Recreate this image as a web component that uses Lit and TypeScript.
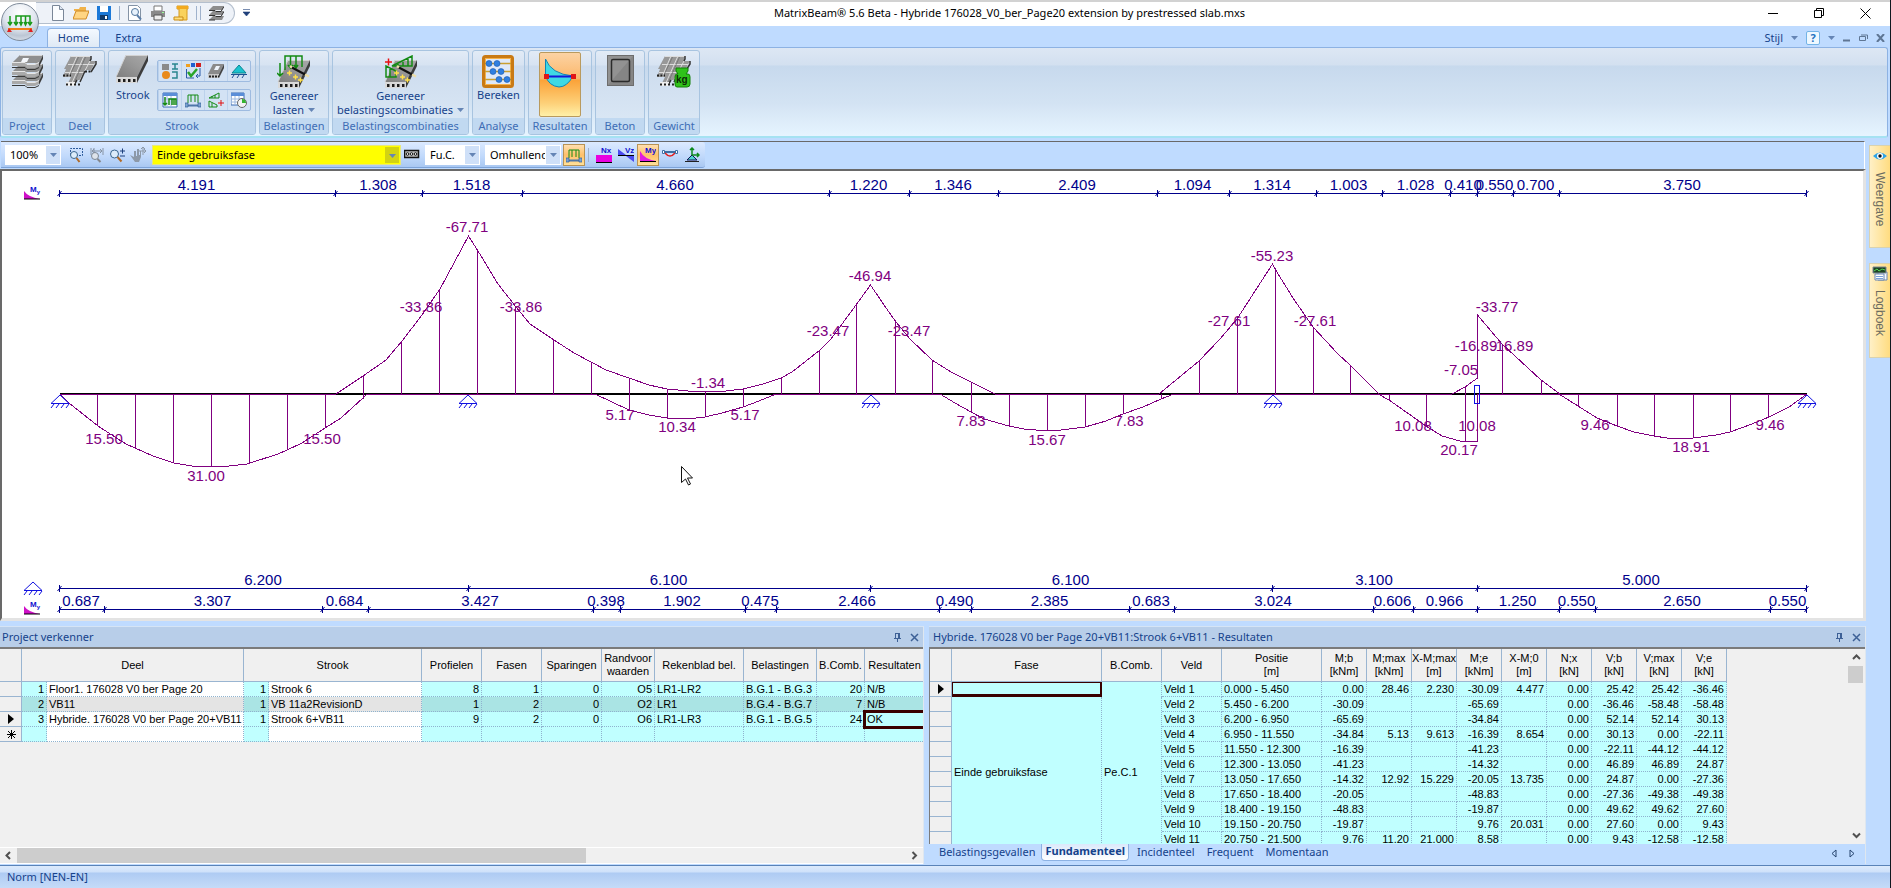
import { LitElement, html, svg, css, nothing } from 'lit';
import { customElement } from 'lit/decorators.js';
import { classMap } from 'lit/directives/class-map.js';

/* ---------- drawing data ---------- */

const X0 = 59.6;
const PX_PER_M = 65.93;
const AXIS_Y = 394;

const dimTop = ['4.191', '1.308', '1.518', '4.660', '1.220', '1.346', '2.409', '1.094', '1.314', '1.003', '1.028', '0.410', '0.550', '0.700', '3.750'];
const dimSupports = ['6.200', '6.100', '6.100', '3.100', '5.000'];
const dimZero = ['0.687', '3.307', '0.684', '3.427', '0.398', '1.902', '0.475', '2.466', '0.490', '2.385', '0.683', '3.024', '0.606', '0.966', '1.250', '0.550', '2.650', '0.550'];
const supports = [0, 6.2, 12.3, 18.4, 26.5];

const curves = [
  '336,394 363,376 386,360 402,341 422,315 440,289 468.5,236 478,251 498,284 516,307 530,324 554,340 574,353 591,362 606,370 629,378 649,385 667,389 688,391 705,392 726,391 743,389 763,384 781,378 792,372 820,350 831,339 856,305 870.5,285 884,305 896,322 910,339 932,360 951,372 971,382 995,394',
  '1159,394 1199,361 1220,339 1237,319 1272.5,264 1275,269 1293,298 1313,327 1338,354 1350,365 1379,394',
  '1452,394 1465,387 1477.5,378 1477.5,315 1502,344 1528,368 1541,380 1560,394',
  '60,394 69,403 98,426 118,439 126,444 135,448 153,456 174,463 192,466 211,467 229,466 247,464 278,454 287,450 302,443 325,428 341,418 363,398 367,394',
  '595,394 629,410 649,415 667,418 696,418 705,417 722,413 743,407 759,401 776,394',
  '940,394 955,403 971,412 984,419 1009,426 1024,429 1047,431 1061,430 1085,427 1106,421 1123,414 1143,407 1161,399 1174,394',
  '1378,394 1389,400 1426,426 1442,436 1460,441 1477.5,441 1477.5,394',
  '1559,394 1578,406 1597,418 1617,426 1634,432 1654,436 1667,438 1693,438 1716,435 1730,432 1752,424 1769,417 1789,407 1807,394',
];

const ordinates: number[][] = [
  [97, 394, 426], [135, 394, 448], [173, 394, 463], [211, 394, 467], [249, 394, 464], [287, 394, 450], [325, 394, 428],
  [363, 376, 399], [401, 341, 394], [439, 289, 394], [477, 251, 394], [515, 307, 394], [553, 340, 394], [591, 362, 394],
  [629, 378, 410], [667, 389, 418], [705, 391, 417], [743, 389, 407], [781, 378, 394], [819, 350, 394], [856, 305, 394],
  [895, 322, 394], [932, 360, 394], [971, 382, 412], [1009, 394, 426], [1047, 394, 431], [1085, 394, 427], [1123, 394, 414],
  [1161, 394, 399], [1199, 361, 394], [1237, 319, 394], [1275, 268, 394], [1313, 327, 394], [1350, 366, 394], [1389, 394, 400],
  [1426, 394, 426], [1465, 387, 441], [1502, 344, 394], [1541, 380, 394], [1578, 394, 406], [1617, 394, 426], [1654, 394, 436],
  [1693, 394, 438], [1730, 394, 432], [1768, 394, 417],
];

const envelope = [[60, 336], [367, 595], [776, 940], [995, 1159], [1174, 1378], [1380, 1452], [1478, 1807]];

const values: [number, number, string][] = [
  [467, 232, '-67.71'], [421, 312, '-33.86'], [521, 312, '-33.86'], [104, 444, '15.50'], [322, 444, '15.50'], [206, 481, '31.00'],
  [620, 420, '5.17'], [677, 432, '10.34'], [745, 420, '5.17'], [708, 388, '-1.34'], [828, 336, '-23.47'], [909, 336, '-23.47'],
  [870, 281, '-46.94'], [971, 426, '7.83'], [1129, 426, '7.83'], [1047, 445, '15.67'], [1229, 326, '-27.61'], [1315, 326, '-27.61'],
  [1272, 261, '-55.23'], [1413, 431, '10.08'], [1477, 431, '10.08'], [1459, 455, '20.17'], [1461, 375, '-7.05'], [1476, 351, '-16.89'],
  [1512, 351, '-16.89'], [1497, 312, '-33.77'], [1595, 430, '9.46'], [1770, 430, '9.46'], [1691, 452, '18.91'],
];

/* ---------- table data ---------- */

const projectRows = [
  ['1', 'Floor1. 176028 V0 ber Page 20', '1', 'Strook 6', '8', '1', '0', 'O5', 'LR1-LR2', 'B.G.1 - B.G.3', '20', 'N/B'],
  ['2', 'VB11', '1', 'VB 11a2RevisionD', '1', '2', '0', 'O2', 'LR1', 'B.G.4 - B.G.7', '7', 'N/B'],
  ['3', 'Hybride. 176028 V0 ber Page 20+VB11', '1', 'Strook 6+VB11', '9', '2', '0', 'O6', 'LR1-LR3', 'B.G.1 - B.G.5', '24', 'OK'],
  ['', '', '', '', '', '', '', '', '', '', '', ''],
];
const projectCols = [22, 25, 197, 25, 153, 60, 60, 60, 53, 89, 73, 48, 60];

const resultCols = [22, 150, 60, 60, 100, 45, 45, 45, 45, 45, 45, 45, 45, 45];
const resultHeads = [['M;b', '[kNm]'], ['M;max', '[kNm]'], ['X-M;max', '[m]'], ['M;e', '[kNm]'], ['X-M;0', '[m]'], ['N;x', '[kN]'], ['V;b', '[kN]'], ['V;max', '[kN]'], ['V;e', '[kN]']];
const resultRows = [
  ['0.000 - 5.450', '0.00', '28.46', '2.230', '-30.09', '4.477', '0.00', '25.42', '25.42', '-36.46'],
  ['5.450 - 6.200', '-30.09', '', '', '-65.69', '', '0.00', '-36.46', '-58.48', '-58.48'],
  ['6.200 - 6.950', '-65.69', '', '', '-34.84', '', '0.00', '52.14', '52.14', '30.13'],
  ['6.950 - 11.550', '-34.84', '5.13', '9.613', '-16.39', '8.654', '0.00', '30.13', '0.00', '-22.11'],
  ['11.550 - 12.300', '-16.39', '', '', '-41.23', '', '0.00', '-22.11', '-44.12', '-44.12'],
  ['12.300 - 13.050', '-41.23', '', '', '-14.32', '', '0.00', '46.89', '46.89', '24.87'],
  ['13.050 - 17.650', '-14.32', '12.92', '15.229', '-20.05', '13.735', '0.00', '24.87', '0.00', '-27.36'],
  ['17.650 - 18.400', '-20.05', '', '', '-48.83', '', '0.00', '-27.36', '-49.38', '-49.38'],
  ['18.400 - 19.150', '-48.83', '', '', '-19.87', '', '0.00', '49.62', '49.62', '27.60'],
  ['19.150 - 20.750', '-19.87', '', '', '9.76', '20.031', '0.00', '27.60', '0.00', '9.43'],
  ['20.750 - 21.500', '9.76', '11.20', '21.000', '8.58', '', '0.00', '9.43', '-12.58', '-12.58'],
];

/* ---------- icons ---------- */

const ico = (w: number, h: number, body: unknown) =>
  html`<svg width=${w} height=${h} viewBox="0 0 ${w} ${h}" aria-hidden="true">${body}</svg>`;

const caret = ico(7, 4, svg`<path d="M0 0h7L3.500 4z" fill="#6585b5"/>`);

const slab = (x: number, y: number) => svg`<g transform="translate(${x} ${y})">
  <path d="M10 0H32L21 22H0z" fill="url(#slabTop)"/><path d="M10 .5H32M10 0L0 22" stroke="#d2d2d2" fill="none"/>
  <path d="M0 22H21V28H0z" fill="#d9d9d9"/><path d="M21 22L32 0V6L21 28z" fill="#3d3d3d"/>
  <path d="M2 25.500H20" stroke="#1c1c1c" stroke-width="3" stroke-dasharray="2.500 2.500"/></g>`;
const defs = svg`<defs><linearGradient id="slabTop" x1="0" y1="1" x2="1" y2="0"><stop offset="0" stop-color="#7d7d7d"/><stop offset=".6" stop-color="#9a9a9a"/><stop offset="1" stop-color="#a8a8a8"/></linearGradient></defs>`;

const layer = (y: number) => svg`<path d="M9 ${y}H32L28 ${y + 8}H1z" fill="#8f8f8f"/><path d="M9 ${y + 0.5}H31" stroke="#d6d6d6"/>
  <path d="M1 ${y + 7}H14L16 ${y + 9}H24L28 ${y + 7}V${y + 11}L24 ${y + 13}H16L14 ${y + 11}H1z" fill="#a9a9a9"/>
  <path d="M1 ${y + 7.5}H14L16 ${y + 9.5}H24L28 ${y + 7.5}" stroke="#e6e6e6" fill="none"/>
  <path d="M32 ${y}V${y + 4}L28 ${y + 12}V${y + 8}z" fill="#3c3c3c"/>
  <path d="M1 ${y + 12.5}H14L16 ${y + 14.5}H24L28 ${y + 12.5}" stroke="#3a3a3a" fill="none"/>`;
const projectIcon = ico(33, 33, svg`${layer(18)}${layer(9)}${layer(0)}<path d="M12 3H18L16 7H10z" fill="#f4f7fb"/>`);
const floorIcon = svg`<path d="M8 1H28L27 6H33L28 15H22L17 25H14L11 30H4L8 22H0L3 14H1z" fill="#989898"/>
  <path d="M8 1.500H28M14 1L5 22M21 1L8 30M27 6L17 25M5 9.500H31M2 17.500H22" stroke="#dcdcdc" fill="none"/>
  <path d="M15.500 2L6.500 21M22.500 2L11 28" stroke="#6a6a6a" stroke-width=".7" fill="none"/>
  <path d="M28 1V4L27 6M33 6V9L28 17M22 16L17 27M11 30L14 25" stroke="#333" stroke-width="1.500" fill="none"/>
  <path d="M0 20.500H8M22 16.500H28" stroke="#222" stroke-width="2" stroke-dasharray="2 1.500"/><path d="M3 29H12" stroke="#efefef" stroke-width="4"/><path d="M3 29.500H17" stroke="#222" stroke-width="2" stroke-dasharray="2 2"/>`;
const stars = svg`<path d="M10 18h5M12.500 15.500v5M16 22h5M18.500 19.500v5M21 25h5M23.500 22.500v5" stroke="#ffe04a" stroke-width="1.500"/><path d="M14 12l15 8" stroke="#111" stroke-width="2"/><path d="M13 11l2 1.500M28 19.500l4 2" stroke="#eedfa8" stroke-width="2.500"/>`;
const loadIcon = ico(34, 34, svg`${defs}${slab(1, 5)}<g fill="none" stroke="#138a13" stroke-width="1.500"><path d="M8 15V1H25V12M13.500 1V12M19 1V12M3 8V21M0 18l3 3 3-3M11 10l2.500 3 2.500-3M17 10l2 3 2-3"/></g>${stars}`);
const combiIcon = ico(34, 34, svg`${defs}${slab(1, 5)}<g fill="none" stroke="#138a13" stroke-width="1.500"><path d="M8 11H28V1zM14 11V8M19 11V5M24 11V3M2 22V11L12 16V22zM6 13V22"/></g><path d="M1 7h7M4.500 3.500v7" stroke="#e81010" stroke-width="1.500"/>${stars}`);
const abacus = ico(32, 33, svg`<rect x="1.500" y="1.500" width="29" height="30" rx="2" fill="#dfe9f8" stroke="#c97a14" stroke-width="3"/><rect x="3.500" y="3.500" width="25" height="26" fill="none" stroke="#f6b24a"/>
  <path d="M3 8.500H29M3 16.500H29M3 24.500H29" stroke="#caa030" stroke-width="1.500"/><g fill="#2f7fe0" stroke="#1a57ad" stroke-width=".6"><circle cx="7" cy="8.500" r="3"/><circle cx="15" cy="8.500" r="3"/><circle cx="11" cy="16.500" r="3"/><circle cx="19" cy="16.500" r="3"/><circle cx="17" cy="24.500" r="3"/><circle cx="25" cy="24.500" r="3"/></g>`);
const resultIcon = ico(34, 34, svg`<path d="M2.500 2Q8 17 30 19Q24 30 16 30Q6 29 2.500 19z" fill="#3fd9e4" stroke="#0e86b8"/><path d="M2 19.500H30" stroke="#1616d8" stroke-width="2"/><path d="M1 17h5v5H1zM28 17h5v5h-5z" fill="#e01616"/>`);
const concreteIcon = ico(27, 31, svg`<rect x=".5" y=".5" width="26" height="30" fill="#929292" stroke="#6d6d6d"/><path d="M1 30L26 1V30z" fill="#858585"/><rect x="4.500" y="4.500" width="18" height="22" rx="1.500" fill="none" stroke="#2b2b2b" stroke-width="1.500"/>`);
const weightIcon = ico(34, 33, svg`${floorIcon}<path d="M19 13h12v3l-2 3h2q2 0 2 3v7q0 3-3 3H20q-2 0-2-3v-7q0-3 2-3h1l-2-3z" fill="#2fc21a" stroke="#128008"/><text x="19" y="28" class="kg">kg</text>`);

const mini = {
  profile: svg`<path d="M0 1h7v6H0z" fill="#8a8a8a"/><path d="M10 1h6M13 1v5M10 6h6M10 9h5v6h-5" fill="none" stroke="#28858f" stroke-width="1.500"/><circle cx="4" cy="12" r="4" fill="#e88a1c"/>`,
  phase: svg`<path d="M1 1h4v3H1z" fill="#f0a020"/><path d="M6 0h4v4H6z" fill="#2060d0"/><path d="M11 0h5v4h-5z" fill="#d02020"/><path d="M1.500 6V15H9M15 5V13H11l2-2M11 13l2 2" fill="none" stroke="#2a5aa8"/><path d="M3 9l3 4 6-7" fill="none" stroke="#28a428" stroke-width="2.500"/>`,
  opening: svg`<path d="M5 1H16L11 11H0z" fill="#8a8a8a"/><path d="M8 3H12L10 7H6z" fill="#eef4fb"/><path d="M0 11H11V15H0z" fill="#c8c8c8"/><path d="M1 13.500H11" stroke="#222" stroke-width="2" stroke-dasharray="2 1"/><path d="M11 11L16 1V5L11 15z" fill="#444"/>`,
  support: svg`<path d="M8 2L15 10H1z" fill="#19c3cf" stroke="#0b8592"/><path d="M0 11.500H16M3 12l-2 3M8 12l-2 3M13 12l-2 3" stroke="#1c4f90"/>`,
  loads: svg`<path d="M1 1h14v14H1z" fill="#fff" stroke="#3b6cb5"/><path d="M1 1h14v3H1z" fill="#5b8ed8"/><path d="M1 7h14M5 4v11M9 4v11" stroke="#9cb8e0"/><path d="M3 5v8M1 11l2 2 2-2M7 13V7h7v6M10 7v6M12 7v6" stroke="#158a15" fill="none" stroke-width="1.500"/>`,
  beam: svg`<path d="M3 11V3h10v8M6 3v7M10 3v7" fill="none" stroke="#158a15"/><path d="M0 13.500H16" stroke="#4d76a8" stroke-width="2"/><path d="M0 11h3v4H0zM13 11h3v4h-3z" fill="#7da3d0" stroke="#315e98" stroke-width=".7"/>`,
  combos: svg`<path d="M1 6H11V1zM4 6V4M7 6V3M1 15V9L9 13V15zM4 15V11" fill="none" stroke="#158a15"/><path d="M10 11h6M13 8v6" stroke="#e01010"/>`,
  report: svg`<path d="M0 1h13v12H0z" fill="#fff" stroke="#3b6cb5"/><path d="M0 1h13v3H0z" fill="#5b8ed8"/><path d="M0 7h13M0 10h13M4 4v9M8 4v9" stroke="#9cb8e0"/><circle cx="11" cy="11" r="4.500" fill="#f3f3f3" stroke="#666"/><path d="M11 11V7A4 4 0 0 1 15 11z" fill="#35b52f"/>`,
};
const lens = svg`<circle cx="5.500" cy="7" r="4" fill="#dcecfa" stroke="#3a668f"/><path d="M8.500 10l4 4.500" stroke="#b06a28" stroke-width="2"/>`;
const small = {
  zoomBox: svg`<path d="M3.500 8V1.500H15.500V8.500H10" fill="none" stroke="#2c5a9a" stroke-dasharray="2 1"/><circle cx="7" cy="8" r="3.500" fill="#dcecfa" stroke="#3a668f"/><path d="M9.500 11l3 4" stroke="#b06a28" stroke-width="2"/>`,
  zoomFit: svg`<path d="M3 8V1M6 1V6M15 1V8M4 4h10M6 2l-2 2 2 2M12 2l2 2-2 2" fill="none" stroke="#8794a5"/><circle cx="7" cy="9" r="3.500" fill="#dde3ea" stroke="#7c8794"/><path d="M9.500 12l3 3" stroke="#84878c" stroke-width="2"/>`,
  zoomPm: svg`${lens}<path d="M11 4h5M13.500 1.500v5M11 9h5" stroke="#1c3f7c"/>`,
  pan: svg`<path d="M0 8l4 2V4h2v5h1V2h2v6h1V4h1v6l-2 5H5z" fill="#8d99a8"/><path d="M13 0v8M9 4h7M11 2l2-2 2 2M14 2l2 2-2 2" stroke="#8d99a8" fill="none"/>`,
  beamBox: svg`<path d="M.5 3.500h14v7H.5z" fill="#bbb" stroke="#111" stroke-width="1.500"/><circle cx="3.500" cy="7" r="1.300" fill="#fff" stroke="#111"/><circle cx="7.500" cy="7" r="1.300" fill="#fff" stroke="#111"/><circle cx="11.500" cy="7" r="1.300" fill="#fff" stroke="#111"/>`,
  nx: svg`<path d="M0 8h16v7H0z" fill="#e800e0"/><path d="M0 15.500h16" stroke="#000"/><text x="5" y="6" class="glyph">Nx</text>`,
  vz: svg`<path d="M0 2v6h8zM16 15V9H8z" fill="#4a4af0"/><path d="M0 8.500h16" stroke="#000"/><text x="7" y="6" class="glyph">Vz</text>`,
  my: svg`<path d="M0 4q4 8 16 10H0z" fill="#e21be0"/><path d="M0 14.500h16" stroke="#000"/><text x="5" y="6" class="glyph">My</text>`,
  defl: svg`<path d="M0 5h16" stroke="#3d6ea3" stroke-width="2"/><path d="M3 6q5 6 10 0" fill="none" stroke="#e02020" stroke-width="1.500"/><path d="M.5 3.500h2v3h-2zM13.500 3.500h2v3h-2z" fill="#fff" stroke="#3d6ea3"/>`,
  reac: svg`<path d="M8 8l5 5H3z" fill="#4fd5cf" stroke="#115"/><path d="M8 8V1M6 3l2-2 2 2M8 8h7M13 6l2 2-2 2" fill="none" stroke="#0e8a1c" stroke-width="1.500"/><path d="M1 14.500h14" stroke="#222"/>`,
  doc: svg`<path d="M2.500 .5h7l4 4V15.500h-11z" fill="#fbfdff" stroke="#7a8798"/><path d="M9.500 .5v4h4" fill="#dfe8f3" stroke="#7a8798"/>`,
  open: svg`<path d="M1 4h5l1-2h6v4H1z" fill="#f0b24a"/><path d="M3 6h13l-3 8H0z" fill="#ffd583" stroke="#d08a24"/>`,
  save: svg`<path d="M1 1h14v14H1z" fill="#1c79d8"/><path d="M4 1h8v6H4z" fill="#fff"/><path d="M4 10h8v5H4z" fill="#123c6c"/><path d="M9 11h2v3H9z" fill="#fff"/>`,
  preview: svg`<path d="M1.500 .5h9l3 3V15.500h-12z" fill="#fff" stroke="#8493a5"/><circle cx="8" cy="7" r="3.500" fill="#e8f2fc" stroke="#54789e"/><path d="M10 10l4 4.500" stroke="#5d7fa8" stroke-width="2"/>`,
  print: svg`<path d="M4 1h8v5H4z" fill="#fff" stroke="#777"/><path d="M1 6h14v6H1z" fill="#8a8a8a"/><path d="M4 10h8v5H4z" fill="#eee" stroke="#555"/><path d="M12 7.500h2" stroke="#9f9"/>`,
  scroll: svg`<path d="M4 1h11v3h-1v11H6V4H4z" fill="#f9d25c" stroke="#d79a1c"/><path d="M4 1h11v3H4z" fill="#f2a91e"/><path d="M1 12h9v3H1z" fill="#ffe07e" stroke="#c98b14"/>`,
  layers: svg`<path d="M5 1h11l-2 4H1zM5 6h11l-2 4H1zM5 11h11l-2 4H1z" fill="#8d8d8d"/><path d="M1 5.500h6l1 1h5l3-5M1 10.500h6l1 1h5l3-5M1 15h6" stroke="#333" fill="none"/>`,
  eye: svg`<path d="M1 8Q8 1 15 8Q8 15 1 8z" fill="#2ba3e8"/><circle cx="8" cy="8" r="3" fill="#fff"/><circle cx="8" cy="8" r="1.700" fill="#111"/>`,
  log: svg`<path d="M6 6h9v8H6z" fill="#f4f8ff" stroke="#6a86b0"/><path d="M1 1h13v6H1z" fill="#1f4422" stroke="#7a8794"/><path d="M2 5l3-2 2 2 3-2 3 1" stroke="#58d858" fill="none"/><path d="M3 8h9v6H3z" fill="#fff" stroke="#6a86b0"/><path d="M4 10.500h7M4 12.500h7" stroke="#7aa0d8"/>`,
};
const i16 = (k: keyof typeof small) => ico(16, 16, small[k]);

const pin = ico(9, 10, svg`<path d="M2.500 1v5M6.500 1v5M5.500 1v5M2 1h5M1 6.500h7M4.500 7v3" stroke="#3d6096" fill="none" shape-rendering="crispEdges"/>`);
const cross = ico(9, 9, svg`<path d="M1 1l7 7M8 1l-7 7" stroke="#3d6096" stroke-width="1.500"/>`);

@customElement('app-root')
export class AppRoot extends LitElement {
  static styles = css`
    :host { display: flex; flex-direction: column; min-height: 100vh; box-sizing: border-box; border-right: 1px solid #10181f; background: #bfdbff; font: 11px/14px 'Noto Sans', sans-serif; color: #15428b; position: relative; }
    * { box-sizing: border-box; }
    svg { display: block; flex: none; }
    button, select { font: inherit; color: inherit; border: 0; margin: 0; padding: 0; background: none; border-radius: 0; }
    button { display: inline-flex; align-items: center; justify-content: center; }
    .kg { font: bold 10px 'Liberation Sans', sans-serif; fill: #0a2a06; }
    .glyph { font: bold 8px 'Liberation Sans', sans-serif; fill: #1010d0; }

    .titlebar { display: flex; height: 26px; background: #fff; border-top: 2px solid #d2d2d2; color: #000; }
    .qat { display: flex; align-items: center; margin-left: 36px; padding: 0 10px 0 14px; height: 22px; border: 1px solid #b4bfcd; border-left: 0; border-radius: 0 11px 11px 0; background: #eef2f8; gap: 7px; }
    .qat button { width: 16px; }
    .bar { width: 1px; height: 14px; background: #9fb2cc; }
    .bars { display: flex; gap: 3px; }
    .more { width: 22px; height: 20px; margin-right: 12px; }
    .title { flex: 1; margin: 0; padding: 0; font: inherit; text-align: center; line-height: 22px; }
    .win button { width: 46px; height: 22px; }
    .win { margin-right: 2px; display: flex; }
    .orb { position: absolute; left: 1px; top: 3px; width: 38px; height: 38px; border-radius: 50%; border: 1px solid #7f8b9a; background: radial-gradient(circle at 50% 25%, #fff, #dfe5ee 50%, #bcc6d4 70%, #eef3fa); }

    .tabs { display: flex; height: 21px; padding: 2px 5px 0 47px; align-items: stretch; }
    .tabs button { width: 53px; margin-right: 2px; line-height: 18px; }
    .tabs .active { border: 1px solid #8db2e3; border-bottom: 0; border-radius: 4px 4px 0 0; background: linear-gradient(#f4f9ff, #dfe9f5); }
    .mdi { margin-left: auto; display: flex; align-items: center; gap: 8px; }
    .tabs .mdi button { width: auto; margin: 0; }
    .tabs .mdi .help { width: 14px; height: 14px; border: 1px solid #74b4e6; border-radius: 2px; background: #eef8ff; font-weight: bold; color: #1d72c0; }

    .ribbon { display: flex; gap: 3px; height: 91px; margin-right: 2px; padding: 2px 1px 1px; border: 1px solid #8db2e3; border-bottom: 2px solid #a5e2f2; border-radius: 3px; background: linear-gradient(#dde7f4, #d3e0f0 17px, #c7d9ed 18px, #d3e3f3 55px, #e6f4ff); }
    .group { display: flex; flex-direction: column; border: 1px solid #a8c4e0; border-radius: 3px; background: linear-gradient(#e2ebf6, #d7e3f2 14px, #cddcee 15px, #dce9f6); overflow: hidden; }
    .group h2 { margin: 0; font: inherit; text-align: center; height: 16px; line-height: 15px; background: #c1d9f1; color: #3e6db5; white-space: nowrap; }
    .body { flex: 1; display: flex; justify-content: center; }
    .big { flex-direction: column; justify-content: flex-start; padding: 4px 0 0; line-height: 14px; white-space: nowrap; }
    .line { display: flex; align-items: center; gap: 4px; }
    .result { width: 42px; padding: 4px 0; margin: 1px 0; border: 1px solid #b99a5e; border-radius: 2px; background: linear-gradient(#fcd3a4, #fbb76a 26px, #fba238 27px, #fdd078 50px, #fff0a8); }
    .body.strook { justify-content: space-between; padding: 0 4px 0 7px; }
    .minis { display: flex; flex-direction: column; gap: 7px; padding-top: 9px; }
    .minirow { display: flex; border: 1px solid #9ebbe0; border-radius: 2px; background: #d3e2f4; }
    .minirow button { width: 23px; height: 20px; border-left: 1px solid #bcd2ec; }

    .main { flex: 1; display: flex; padding-top: 3px; min-height: 0; }
    .work { flex: 1; min-width: 0; display: flex; flex-direction: column; }
    .toolbar { display: flex; height: 28px; margin: 0 1px; border-top: 1px solid #696969; border-right: 1px solid #fff; }
    .strip { display: flex; align-items: center; height: 26px; padding: 0 2px 0 4px; background: linear-gradient(#dceaff, #bfd8fb 60%, #a9c8f2); border-bottom: 1px solid #7da3d8; border-radius: 0 3px 3px 0; }
    .strip button { width: 22px; height: 22px; }
    .strip .nav { width: 21px; }
    .strip .on { border: 1px solid #b79355; background: linear-gradient(#ffdfb0, #ffc06a 50%, #ffe19a); }
    .strip .bar { margin: 0 4px 0 3px; }
    .combo { position: relative; height: 20px; background: #fff; color: #000; }
    .combo select { display: block; appearance: none; width: 100%; height: 20px; padding: 0 16px 0 5px; outline: 0; font-size: 11px; }
    .combo::after { content: ''; position: absolute; right: 1px; top: 1px; width: 14px; height: 18px; background: #cfe0f8; pointer-events: none; }
    .combo svg { position: absolute; right: 4px; top: 8px; z-index: 1; pointer-events: none; }
    .zoom { width: 56px; margin-right: 3px; }
    .phase { width: 249px; margin-left: 4px; background: #ff0; border: 1px solid #e8e87a; }
    .phase select { height: 18px; padding-left: 4px; }
    .phase::after { background: #d3d312; height: 16px; }
    .load { width: 55px; margin: 0 5px 0 2px; }
    .env { width: 76px; margin-right: 2px; }

    .canvas { flex: 1; min-height: 0; background: #fff; border: solid #696969; border-width: 2px 3px 3px 2px; border-right-color: #e3e3e3; border-bottom-color: #e3e3e3; position: relative; }
    .canvas svg { width: 100%; height: 100%; position: absolute; inset: 0; }
    .dim { stroke: #00008b; fill: none; }
    .dimtext { font: 15px 'Liberation Sans', sans-serif; fill: #00008b; text-anchor: middle; }
    .moment { stroke: #800080; fill: none; }
    .value { font: 15px 'Liberation Sans', sans-serif; fill: #800080; text-anchor: middle; }
    .sup { stroke: #1010e0; fill: none; }

    .panels { display: flex; gap: 5px; height: 244px; padding: 5px 0 1px; }
    .panel { display: flex; flex-direction: column; min-width: 0; border-top: 1px solid #d5e4f5; border-right: 1px solid #dfe7ef; background: #f0f0f0; overflow: hidden; }
    .left { flex: 924 1 0; }
    .right { flex: 937 1 0; }
    .head { display: flex; align-items: center; height: 20px; background: #b8cee9; padding: 0 0 0 2px; flex: none; }
    .right .head { padding-left: 4px; }
    .head h2 { margin: 0; flex: 1; font: inherit; line-height: 18px; }
    .head button { width: 17px; height: 18px; }
    .sheet { flex: 1; min-height: 0; overflow: hidden; border-top: 2px solid #7b7b7b; color: #000; font: 11px/14px 'Liberation Sans', sans-serif; }
    .right .sheet { border-left: 1px solid #7b7b7b; }
    table { border-collapse: separate; border-spacing: 0; table-layout: fixed; width: 0; }
    th { height: 33px; padding: 0; font-weight: normal; line-height: 13px; background: #f0f0f0; border: solid #9ab5d1; border-width: 0 1px 1px 0; white-space: nowrap; overflow: hidden; }
    td { height: 15px; padding: 0 2px; line-height: 14px; background: #c0ffff; border: dotted #8fb3cf; border-width: 0 1px 1px 0; white-space: nowrap; overflow: hidden; }
    td.rowhead { padding: 0 0 0 7px; background: #f0f0f0; border-style: solid; border-color: #9ab5d1; }
    td.num { text-align: right; }
    td.white { background: #fff; }
    .alt td { background: #aae4e4; }
    .alt td.white { background: #e4e4e4; }
    .alt td.rowhead { background: #f0f0f0; }
    td.sel { outline: 3px solid #3a0000; outline-offset: -1px; position: relative; }
    td.selfirst { border: 1px solid #3a0000; border-right: 2px solid #3a0000; border-bottom: 3px solid #3a0000; }
    td.open { border-bottom: 0; }
    .hscroll { display: flex; height: 17px; border-top: 1px solid #fff; border-bottom: 1px solid #fff; flex: none; }
    .hscroll button { width: 17px; }
    .track { flex: 1; }
    .thumb { width: 64%; height: 15px; background: #cdcdcd; }
    .row { display: flex; flex: 1; min-height: 0; }
    .vscroll { width: 17px; display: flex; flex-direction: column; border-top: 2px solid #7b7b7b; }
    .vscroll button { width: 16px; height: 17px; }
    .vthumb { height: 17px; margin-right: 2px; background: #cdcdcd; }
    .vtrack { flex: 1; }
    .sheets { display: flex; align-items: flex-start; height: 20px; padding: 0 4px; background: #bfdbff; flex: none; }
    .sheets button { height: 17px; padding: 0 6px 2px; }
    .sheets .active { font-weight: bold; padding: 0 3px 2px; margin-right: 2px; background: linear-gradient(#dbe9fb, #fff); border: 1px solid #8db2e3; border-top: 0; border-radius: 0 0 4px 4px; }
    .sheets .end { margin-left: auto; display: flex; }
    .sheets .end button { padding: 0; width: 18px; height: 19px; }

    .dock { width: 24px; padding: 4px 0 0 3px; display: flex; flex-direction: column; gap: 15px; }
    .dock button { flex-direction: column; justify-content: flex-start; gap: 8px; padding-top: 2px; height: 103px; border: 1px solid #d9d2b0; border-right: 0; background: linear-gradient(90deg, #fff0c6, #ffdc80); color: #6b6b60; }
    .dock button + button { height: 95px; }
    .dock span { writing-mode: vertical-rl; font: 12px/14px 'Liberation Sans', sans-serif; }
    .status { height: 23px; padding: 0 7px; line-height: 21px; border-top: 1px solid #5a83b8; background: linear-gradient(#dceafc, #cfe1fa 6px, #aecbf3 7px, #c5dbf8); }
  `;

  private dims(labels: string[], line: number, base: number) {
    let at = 0;
    const ticks = [0, ...labels.map((l) => (at += parseFloat(l)))].map((m) => Math.round(X0 + m * PX_PER_M - 0.5) + 0.5);
    return svg`<path class="dim" shape-rendering="crispEdges" d="M${ticks[0]} ${line + 0.5}H${ticks[ticks.length - 1]}"/>
      ${ticks.map((x) => svg`<path class="dim" d="M${x} ${line - 3}V${line + 4}M${x - 2} ${line + 3}L${x + 2} ${line - 2}"/>`)}
      ${labels.map((l, i) => svg`<text class="dimtext" x=${(ticks[i] + ticks[i + 1]) / 2 - 1} y=${base}>${l}</text>`)}`;
  }

  private support(x: number, y: number) {
    return svg`<path class="sup" d="M${x} ${y}L${x + 9} ${y + 8.5}H${x - 9}L${x} ${y}M${x - 6} ${y + 9}l-3 4M${x - 1} ${y + 9}l-3 4M${x + 4} ${y + 9}l-3 4M${x + 9} ${y + 9}l-3 4"/>`;
  }

  private axisMark(x: number, y: number) {
    return svg`<path d="M${x} ${y + 6}q4 6 16 8H${x}z" fill="#d010c8"/><path d="M${x} ${y + 14}h16" stroke="#000"/><text class="glyph" x=${x + 6} y=${y + 7}>M<tspan font-size="6" dy="2">y</tspan></text>`;
  }

  private drawing() {
    return html`<svg viewBox="2 171 1861 447" role="img" aria-label="Momentenlijn My">
      ${this.dims(dimTop, 193, 190)}${this.dims(dimSupports, 588, 585)}${this.dims(dimZero, 609, 606)}
      <rect x="60" y="393" width="1747" height="2" fill="#000"></rect>
      ${envelope.map(([a, b]) => svg`<path class="moment" d="M${a} 394.500H${b}"/>`)}
      ${ordinates.map(([x, a, b]) => svg`<path class="moment" d="M${x + 0.5} ${a}V${b}" shape-rendering="crispEdges"/>`)}
      ${curves.map((p) => svg`<polyline class="moment" points=${p} shape-rendering="crispEdges"/>`)}
      ${supports.map((m) => this.support(Math.round(X0 + m * PX_PER_M), AXIS_Y + 1))}
      <rect class="sup" x="1474.500" y="385.500" width="5" height="18"></rect>
      ${values.map(([x, y, t]) => svg`<text class="value" x=${x} y=${y}>${t}</text>`)}
      ${this.axisMark(24, 185)}${this.support(33, 582)}${this.axisMark(24, 600)}
      <path d="M681.500 466.500v16l4-3.500 3 6 2-1-3-6h5z" fill="#fff" stroke="#111"></path>
    </svg>`;
  }

  private group(label: string, width: number, body: unknown, extra = '') {
    return html`<section class="group" style="width:${width}px"><div class="body ${extra}">${body}</div><h2>${label}</h2></section>`;
  }

  private ribbon() {
    const cell = (k: keyof typeof mini, n: string) => html`<button aria-label=${n}>${ico(16, 16, mini[k])}</button>`;
    return html`<div class="ribbon">
      ${this.group('Project', 50, html`<button class="big" aria-label="Project">${projectIcon}</button>`)}
      ${this.group('Deel', 50, html`<button class="big" aria-label="Deel">${ico(34, 33, floorIcon)}</button>`)}
      ${this.group('Strook', 148, html`<button class="big">${ico(33, 33, svg`${defs}${slab(0, 0)}`)}<span>Strook</span></button>
        <div class="minis">
          <div class="minirow">${cell('profile', 'Profielen')}${cell('phase', 'Fasen')}${cell('opening', 'Sparingen')}${cell('support', 'Opleggingen')}</div>
          <div class="minirow">${cell('loads', 'Belastingen')}${cell('beam', 'Rekenblad')}${cell('combos', 'Combinaties')}${cell('report', 'Rapport')}</div>
        </div>`, 'strook')}
      ${this.group('Belastingen', 70, html`<button class="big">${loadIcon}<span>Genereer</span><span class="line">lasten ${caret}</span></button>`)}
      ${this.group('Belastingscombinaties', 137, html`<button class="big">${combiIcon}<span>Genereer</span><span class="line">belastingscombinaties ${caret}</span></button>`)}
      ${this.group('Analyse', 53, html`<button class="big">${abacus}<span>Bereken</span></button>`)}
      ${this.group('Resultaten', 64, html`<button class="big result" aria-label="Resultaten">${resultIcon}</button>`)}
      ${this.group('Beton', 50, html`<button class="big" aria-label="Beton">${concreteIcon}</button>`)}
      ${this.group('Gewicht', 52, html`<button class="big" aria-label="Gewicht">${weightIcon}</button>`)}
    </div>`;
  }

  private combo(cls: string, label: string, text: string) {
    return html`<div class="combo ${cls}"><select aria-label=${label}><option>${text}</option></select>${caret}</div>`;
  }

  private toolbar() {
    const tool = (k: keyof typeof small, n: string, cls = '') => html`<button class=${cls} aria-label=${n}>${i16(k)}</button>`;
    return html`<div class="toolbar"><div class="strip">
      ${this.combo('zoom', 'Zoom', '100%')}
      ${tool('zoomBox', 'Zoom venster', 'nav')}${tool('zoomFit', 'Zoom passend', 'nav')}${tool('zoomPm', 'Zoom', 'nav')}${tool('pan', 'Verschuiven', 'nav')}
      ${this.combo('phase', 'Fase', 'Einde gebruiksfase')}
      ${tool('beamBox', 'Doorsnede')}
      ${this.combo('load', 'Combinatie', 'Fu.C.')}
      ${this.combo('env', 'Omhullende', 'Omhullende')}
      <button class="on" aria-label="Belastingen tonen">${ico(16, 16, mini.beam)}</button><span class="bar"></span>
      ${tool('nx', 'Nx')}${tool('vz', 'Vz')}${tool('my', 'My', 'on')}${tool('defl', 'Doorbuiging')}${tool('reac', 'Reacties')}
    </div></div>`;
  }

  private panelHead(title: string) {
    return html`<div class="head"><h2>${title}</h2><button aria-label="Vastzetten">${pin}</button><button aria-label="Sluiten">${cross}</button></div>`;
  }

  private chevron(d: string) {
    return ico(9, 9, svg`<path d=${d} fill="none" stroke="#505050" stroke-width="2"/>`);
  }

  private projectPanel() {
    const white = [1, 3];
    const text = [1, 3, 8, 9, 11];
    const mark = [nothing, nothing,
      ico(7, 10, svg`<path d="M1 0l6 5-6 5z" fill="#000"/>`),
      ico(9, 9, svg`<path d="M4.500 0v9M0 4.500h9M1 1l7 7M8 1l-7 7" stroke="#000"/>`)];
    return html`<section class="panel left">${this.panelHead('Project verkenner')}
      <div class="sheet"><table>
        <colgroup>${projectCols.map((w) => html`<col style="width:${w}px">`)}</colgroup>
        <thead><tr><th></th><th colspan="2">Deel</th><th colspan="2">Strook</th><th>Profielen</th><th>Fasen</th><th>Sparingen</th><th>Randvoor<br>waarden</th><th>Rekenblad bel.</th><th>Belastingen</th><th>B.Comb.</th><th>Resultaten</th></tr></thead>
        <tbody>${projectRows.map((r, i) => html`<tr class=${i === 1 ? 'alt' : ''}><td class="rowhead">${mark[i]}</td>
          ${r.map((c, j) => html`<td class=${classMap({ white: white.includes(j), num: !text.includes(j), sel: i === 2 && j === 11 })}>${c}</td>`)}</tr>`)}</tbody>
      </table></div>
      <div class="hscroll"><button aria-label="Links">${this.chevron('M6 1L2.500 4.500L6 8')}</button><div class="track"><div class="thumb"></div></div><button aria-label="Rechts">${this.chevron('M2.500 1L6 4.500L2.500 8')}</button></div>
    </section>`;
  }

  private resultPanel() {
    return html`<section class="panel right">${this.panelHead('Hybride. 176028 V0 ber Page 20+VB11:Strook 6+VB11 - Resultaten')}
      <div class="row"><div class="sheet"><table>
        <colgroup>${resultCols.map((w) => html`<col style="width:${w}px">`)}</colgroup>
        <thead><tr><th></th><th>Fase</th><th>B.Comb.</th><th>Veld</th><th>Positie<br>[m]</th>${resultHeads.map(([a, b]) => html`<th>${a}<br>${b}</th>`)}</tr></thead>
        <tbody>${resultRows.map((r, i) => html`<tr><td class="rowhead">${i === 0 ? ico(7, 10, svg`<path d="M1 0l6 5-6 5z" fill="#000"/>`) : nothing}</td>
          ${i === 0 ? html`<td class="selfirst"></td><td class="open"></td>` : nothing}
          ${i === 1 ? html`<td rowspan="10">Einde gebruiksfase</td><td rowspan="10">Pe.C.1</td>` : nothing}
          <td>Veld ${i + 1}</td>${r.map((c, j) => html`<td class=${j ? 'num' : ''}>${c}</td>`)}</tr>`)}</tbody>
      </table></div>
      <div class="vscroll"><button aria-label="Omhoog">${this.chevron('M1 6L4.500 2.500L8 6')}</button><div class="vthumb"></div><div class="vtrack"></div><button aria-label="Omlaag">${this.chevron('M1 2.500L4.500 6L8 2.500')}</button></div></div>
      <div class="sheets"><button>Belastingsgevallen</button><button class="active">Fundamenteel</button><button>Incidenteel</button><button>Frequent</button><button>Momentaan</button>
        <span class="end"><button aria-label="Vorige">${ico(6, 9, svg`<path d="M5 1v7L1 4.500z" fill="none" stroke="#26456f"/>`)}</button><button aria-label="Volgende">${ico(6, 9, svg`<path d="M1 1v7l4-3.500z" fill="none" stroke="#26456f"/>`)}</button></span></div>
    </section>`;
  }

  render() {
    const q = (k: keyof typeof small, n: string) => html`<button aria-label=${n}>${i16(k)}</button>`;
    return html`
      <header class="titlebar">
        <div class="qat">${q('doc', 'Nieuw')}${q('open', 'Openen')}${q('save', 'Opslaan')}<span class="bar"></span>${q('preview', 'Voorbeeld')}${q('print', 'Afdrukken')}${q('scroll', 'Rapport')}<span class="bars"><span class="bar"></span><span class="bar"></span></span>${q('layers', 'Project')}</div>
        <button class="more" aria-label="Meer">${ico(7, 7, svg`<path d="M0 .5h7M0 3h7L3.500 7z" fill="#1f3f7a" stroke="#1f3f7a" stroke-width=".6"/>`)}</button>
        <h1 class="title">MatrixBeam® 5.6 Beta - Hybride 176028_V0_ber_Page20 extension by prestressed slab.mxs</h1>
        <div class="win">
          <button aria-label="Minimaliseren">${ico(10, 10, svg`<path d="M0 5.500h10" stroke="#000"/>`)}</button>
          <button aria-label="Verkleinen">${ico(10, 10, svg`<path d="M.5 2.500h7v7h-7zM2.500 2.500v-2h7v7h-2" fill="none" stroke="#000"/>`)}</button>
          <button aria-label="Sluiten">${ico(11, 11, svg`<path d="M.5 .5l10 10M10.500 .5l-10 10" stroke="#000"/>`)}</button>
        </div>
      </header>
      <button class="orb" aria-label="Menu">${ico(26, 20, svg`<g fill="none" stroke="#1b9a1b" stroke-width="1.500"><path d="M3 4v9M1 10l2 3 2-3M9 13V4h14v9M14 4v9M18.500 4v9M7 10l2 3 2-3M12.500 10l1.500 3 1.500-3M17 10l1.500 3 1.500-3M21 10l2 3 2-3"/></g><path d="M1 17h24" stroke="#f08018" stroke-width="2"/><path d="M2 16l3 4H0zM24 16l2 4h-5z" fill="#e02020"/>`)}</button>
      <nav class="tabs"><button class="active">Home</button><button>Extra</button>
        <div class="mdi"><button>Stijl</button>${caret}<button class="help" aria-label="Help">?</button>${caret}
          <button aria-label="Venster minimaliseren">${ico(8, 8, svg`<path d="M0 6.500h7" stroke="#5f7694" stroke-width="2"/>`)}</button>
          <button aria-label="Venster herstellen">${ico(9, 8, svg`<path d="M.5 2.500h6v4h-6zM2 1h6.500v4" fill="none" stroke="#5f7694"/>`)}</button>
          <button aria-label="Venster sluiten">${ico(9, 8, svg`<path d="M1 0l7 8M8 0l-7 8" stroke="#5f7694" stroke-width="2"/>`)}</button></div></nav>
      ${this.ribbon()}
      <main class="main">
        <div class="work">${this.toolbar()}
          <div class="canvas">${this.drawing()}</div>
          <div class="panels">${this.projectPanel()}${this.resultPanel()}</div>
        </div>
        <aside class="dock"><button>${i16('eye')}<span>Weergave</span></button><button>${i16('log')}<span>Logboek</span></button></aside>
      </main>
      <footer class="status">Norm [NEN-EN]</footer>`;
  }
}
